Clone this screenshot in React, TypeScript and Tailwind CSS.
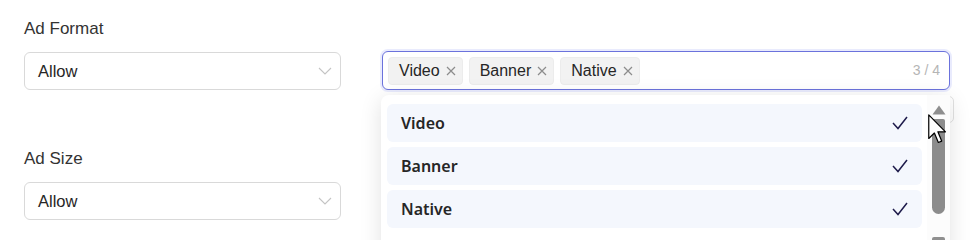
import React from "react";

const Chevron = () => (
  <svg width="14" height="8" viewBox="0 0 14 8" fill="none">
    <path d="M1 1 L7 7 L13 1" stroke="#c4c4c4" strokeWidth="1.1" />
  </svg>
);

const SelectBox = ({ value }: { value: string }) => (
  <div className="flex h-[38px] items-center justify-between rounded-[6px] border border-[#d9d9d9] bg-white pl-[13px] pr-[8px]">
    <span className="text-[16.5px] text-[#262626]">{value}</span>
    <Chevron />
  </div>
);

const Tag = ({ label }: { label: string }) => (
  <div className="flex h-[28px] items-center gap-[6px] rounded-[4px] border border-[#ececec] bg-[#f2f2f2] pl-[10px] pr-[6px]">
    <span className="text-[16px] text-[#262626]">{label}</span>
    <svg width="10" height="10" viewBox="0 0 10 10">
      <path d="M1 1 L9 9 M9 1 L1 9" stroke="#8c8c8c" strokeWidth="1.2" />
    </svg>
  </div>
);

const Check = () => (
  <svg width="16" height="14" viewBox="0 0 16 14" fill="none">
    <path d="M1 7 L6 12.5 L15 1" stroke="#1e1b4b" strokeWidth="1.5" />
  </svg>
);

const Option = ({ label }: { label: string }) => (
  <div className="flex h-[38px] items-center justify-between rounded-[6px] bg-[#f4f7fd] pl-[14px] pr-[14px]">
    <span
      className="text-[16px] font-semibold text-[#262626]"
      style={{ fontFamily: '"Noto Sans", sans-serif' }}
    >
      {label}
    </span>
    <Check />
  </div>
);

export default function App() {
  return (
    <div
      className="relative h-[240px] w-[978px] overflow-hidden bg-white"
      style={{ fontFamily: '"Liberation Sans", Arial, sans-serif' }}
    >
      <div className="flex gap-[41px] pl-[24px]">
        <div className="flex w-[317px] flex-col pt-[18px]">
          <div className="text-[17px] leading-[22px] text-[#333]">Ad Format</div>
          <div className="mt-[12px]">
            <SelectBox value="Allow" />
          </div>
          <div className="mt-[58px] text-[17px] leading-[22px] text-[#333]">Ad Size</div>
          <div className="mt-[12px]">
            <SelectBox value="Allow" />
          </div>
        </div>

        <div className="relative mt-[51px] w-[568px]">
          {/* peeking element behind dropdown */}
          <div className="absolute left-[500px] top-[45px] h-[27px] w-[72px] rounded-[5px] border border-[#e2e2e2] bg-white" />

          <div className="relative z-10 flex h-[39px] items-center justify-between rounded-[6px] border border-[#6b72dc] bg-white pl-[5px] pr-[9px] shadow-[0_0_0_2px_rgba(99,110,241,0.14)]">
            <div className="flex items-center gap-[6px]">
              <Tag label="Video" />
              <Tag label="Banner" />
              <Tag label="Native" />
            </div>
            <span className="text-[14px] text-[#b5b5b5]">3 / 4</span>
          </div>

          <div className="absolute left-[-1px] top-[44px] z-20 flex h-[200px] w-[569px] rounded-t-[8px] bg-white shadow-[0_4px_22px_rgba(0,0,0,0.12)]">
            <div className="flex flex-1 flex-col gap-[5px] pl-[6px] pt-[9px]">
              <Option label="Video" />
              <Option label="Banner" />
              <Option label="Native" />
            </div>
            <div className="relative ml-[5px] w-[23px] bg-[#fcfcfc]">
              <svg className="absolute left-[5px] top-[10px]" width="14" height="10" viewBox="0 0 14 10">
                <path d="M7 0.5 L13.5 9.5 L0.5 9.5 Z" fill="#8f8f8f" />
              </svg>
              <div className="absolute left-[5px] top-[24px] h-[95px] w-[13px] rounded-b-[7px] rounded-t-[2px] bg-[#8c8c8c]" />
              <div className="absolute left-[5px] top-[142px] h-[10px] w-[13px] rounded-t-[2px] bg-[#8f8f8f]" />
            </div>
          </div>
        </div>
      </div>

      {/* mouse cursor */}
      <svg
        className="absolute left-[928px] top-[114px] z-30"
        width="19"
        height="30"
        viewBox="0 0 12.5 19.5"
      >
        <path
          d="M0.5 0.5 L0.5 16 L4.2 12.4 L6.8 18.6 L9 17.7 L6.5 11.6 L11.5 11.6 Z"
          fill="#ffffff"
          stroke="#000000"
          strokeWidth="0.8"
          strokeLinejoin="round"
        />
      </svg>
    </div>
  );
}
